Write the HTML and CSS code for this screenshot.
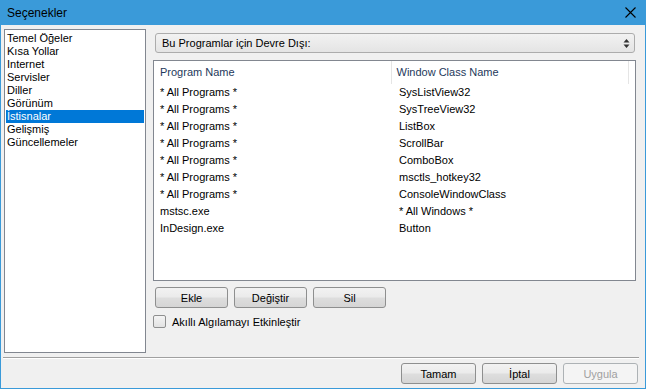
FILE: index.html
```html
<!DOCTYPE html>
<html lang="tr">
<head>
<meta charset="utf-8">
<title>Seçenekler</title>
<link rel="stylesheet" href="styles.css">
</head>
<body>
<div class="window">
  <div class="titlebar">
    <span class="title">Seçenekler</span>
    <svg class="close" width="11" height="11" viewBox="0 0 11 11"><path d="M0.5 0.5 L10.5 10.5 M10.5 0.5 L0.5 10.5" stroke="#000" stroke-width="1.1" fill="none"/></svg>
  </div>
  <div class="content">
    <div class="main">
      <ul class="tree">
        <li>Temel Öğeler</li>
        <li>Kısa Yollar</li>
        <li>Internet</li>
        <li>Servisler</li>
        <li>Diller</li>
        <li>Görünüm</li>
        <li class="selected">İstisnalar</li>
        <li>Gelişmiş</li>
        <li>Güncellemeler</li>
      </ul>
      <div class="pane">
        <div class="combo">
          <span>Bu Programlar için Devre Dışı:</span>
          <svg class="arrows" width="7" height="11" viewBox="0 0 7 11"><path d="M3.5 1 L6.5 4.5 L0.5 4.5 Z M0.5 6.5 L6.5 6.5 L3.5 10 Z" fill="#333"/></svg>
        </div>
        <div class="listview">
          <div class="lv-header">
            <div class="col col1">Program Name</div>
            <div class="col col2">Window Class Name</div>
            <div class="col col3"></div>
          </div>
          <div class="lv-row"><span class="c1">* All Programs *</span><span class="c2">SysListView32</span></div>
          <div class="lv-row"><span class="c1">* All Programs *</span><span class="c2">SysTreeView32</span></div>
          <div class="lv-row"><span class="c1">* All Programs *</span><span class="c2">ListBox</span></div>
          <div class="lv-row"><span class="c1">* All Programs *</span><span class="c2">ScrollBar</span></div>
          <div class="lv-row"><span class="c1">* All Programs *</span><span class="c2">ComboBox</span></div>
          <div class="lv-row"><span class="c1">* All Programs *</span><span class="c2">msctls_hotkey32</span></div>
          <div class="lv-row"><span class="c1">* All Programs *</span><span class="c2">ConsoleWindowClass</span></div>
          <div class="lv-row"><span class="c1">mstsc.exe</span><span class="c2">* All Windows *</span></div>
          <div class="lv-row"><span class="c1">InDesign.exe</span><span class="c2">Button</span></div>
        </div>
        <div class="btnrow">
          <button class="btn">Ekle</button>
          <button class="btn">Değiştir</button>
          <button class="btn">Sil</button>
        </div>
        <label class="check"><span class="box"></span><span>Akıllı Algılamayı Etkinleştir</span></label>
      </div>
    </div>
    <div class="sep"></div>
    <div class="footer">
      <button class="btn fbtn">Tamam</button>
      <button class="btn fbtn">İptal</button>
      <button class="btn fbtn disabled">Uygula</button>
    </div>
  </div>
</div>
</body>
</html>
```
FILE: styles.css
```css
* { box-sizing: border-box; }
html, body { margin: 0; padding: 0; }
body {
  width: 646px;
  height: 389px;
  background: #f0f0f0;
  font-family: "Liberation Sans", Arial, sans-serif;
  font-size: 11px;
  color: #000;
}
.window {
  width: 646px;
  height: 389px;
  border: 1px solid #3a9ad9;
  border-top: 0;
  background: #f0f0f0;
  display: flex;
  flex-direction: column;
}
.titlebar {
  height: 25px;
  background: #3a9ad9;
  margin: 0 -1px;
  display: flex;
  align-items: center;
  justify-content: space-between;
  padding: 0 10px 0 7px;
}
.title {
  font-size: 12px;
  color: #000;
}
.close { display: block; }
.content {
  flex: 1;
  display: flex;
  flex-direction: column;
}
.main {
  display: flex;
  padding: 4px 9px 0 3px;
  gap: 7px;
}
.tree {
  flex: none;
  list-style: none;
  margin: 0;
  padding: 2px 1px 1px;
  width: 142px;
  height: 324px;
  background: #fff;
  border: 1px solid #828790;
}
.tree li {
  height: 13px;
  line-height: 13px;
  padding-left: 1px;
  white-space: nowrap;
}
.tree li.selected {
  background: #0078d7;
  color: #fff;
}
.pane {
  flex: 1;
  min-width: 0;
  display: flex;
  flex-direction: column;
  padding-top: 4px;
}
.combo {
  margin: 0 1px 0 2px;
  height: 20px;
  border: 1px solid #acacac;
  border-radius: 3px;
  background: linear-gradient(#f2f2f2, #e4e4e4);
  display: flex;
  align-items: center;
  justify-content: space-between;
  padding: 0 4px 0 6px;
}
.arrows { display: block; }
.listview {
  margin-top: 7px;
  height: 221px;
  border: 1px solid #828790;
  background: #fff;
}
.lv-header {
  display: flex;
  height: 23px;
}
.col {
  height: 23px;
  line-height: 23px;
  color: #1e395b;
  padding-left: 6px;
  border-right: 1px solid #e5e5e5;
}
.col1 { width: 240px; }
.col2 { width: 240px; padding-left: 5px; }
.col3 { flex: 1; border-right: 0; }
.lv-row {
  display: flex;
  height: 17px;
  line-height: 17px;
}
.lv-row .c1 { width: 240px; padding-left: 6px; }
.lv-row .c2 { padding-left: 5px; }
.btnrow {
  display: flex;
  gap: 6px;
  margin: 6px 0 0 2px;
}
.btn {
  font-family: "Liberation Sans", Arial, sans-serif;
  font-size: 11px;
  color: #000;
  height: 21px;
  width: 73px;
  padding: 0;
  border: 1px solid #8e8f8f;
  border-radius: 3px;
  background: linear-gradient(#f2f2f2 0%, #ebebeb 45%, #dddddd 55%, #d5d5d5 100%);
}
.check {
  display: flex;
  align-items: center;
  gap: 6px;
  margin: 6px 0 0 0;
  height: 15px;
}
.box {
  width: 13px;
  height: 13px;
  border: 1px solid #8e8f8f;
  border-radius: 2px;
  background: linear-gradient(#f4f4f4, #e2e2e2);
}
.sep {
  margin: 4px 6px 0 2px;
  height: 2px;
  border-top: 1px solid #a0a0a0;
  border-bottom: 1px solid #ffffff;
}
.footer {
  display: flex;
  justify-content: flex-end;
  gap: 6px;
  padding: 4px 7px 0 0;
}
.fbtn { width: 75px; }
.fbtn.disabled {
  color: #a0a0a0;
  border-color: #adb2b5;
  background: #f4f4f4;
}
```
